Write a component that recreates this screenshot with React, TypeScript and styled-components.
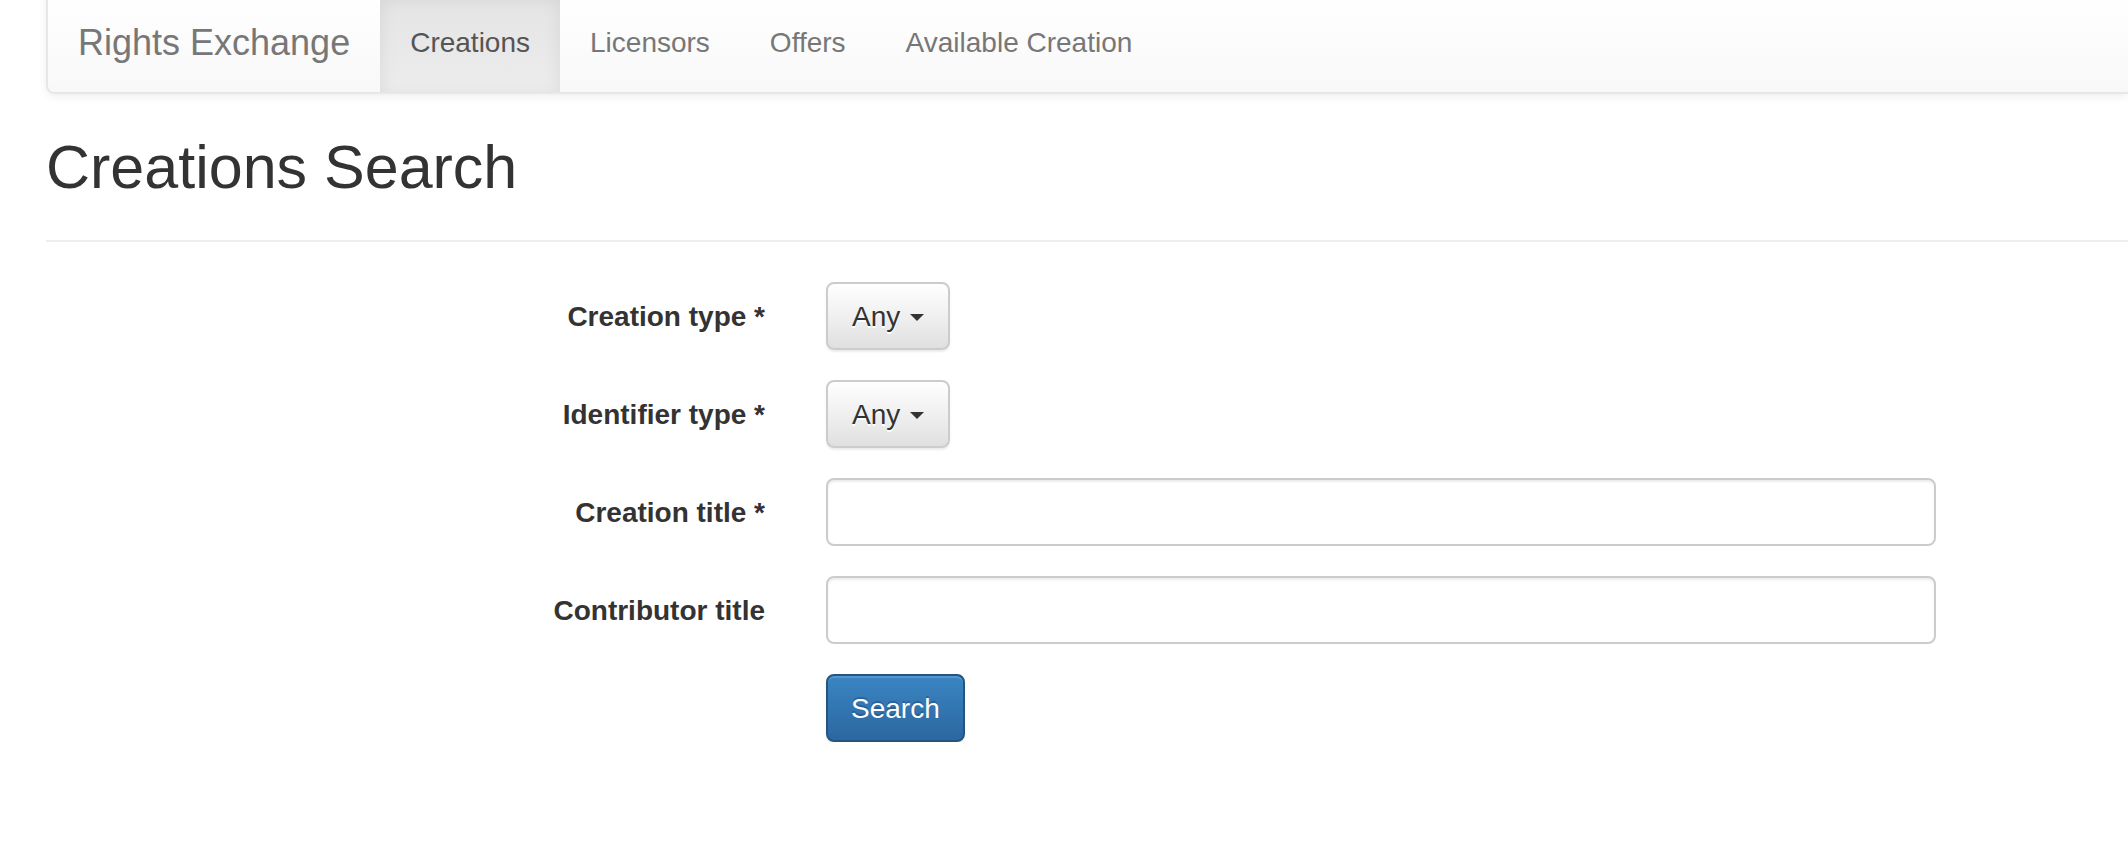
import styled, { createGlobalStyle } from "styled-components";

const GlobalStyle = createGlobalStyle`
  body {
    margin: 0;
    background: #fff;
    color: #333;
    font-family: "Liberation Sans", Arial, Helvetica, sans-serif;
    overflow: hidden;
  }
  * {
    box-sizing: border-box;
  }
`;

const Page = styled.div`
  padding-left: 46px;
`;

// navbar runs off the right edge of the window, so no right border there
const Navbar = styled.nav`
  margin-top: -10px;
  height: 104px;
  display: flex;
  align-items: stretch;
  padding-top: 1px;
  border: 2px solid #e7e7e7;
  border-right: 0;
  border-radius: 8px 0 0 8px;
  background: linear-gradient(to bottom, #fff 0, #f8f8f8 100%);
  box-shadow: inset 0 2px 0 rgba(255, 255, 255, 0.15),
    0 2px 10px rgba(0, 0, 0, 0.075);
`;

const Brand = styled.a`
  display: flex;
  align-items: center;
  padding: 0 30px;
  font-size: 36px;
  color: #777;
  text-decoration: none;
`;

const NavList = styled.ul`
  display: flex;
  margin: -1px 0 0;
  padding: 0;
  list-style: none;
`;

const NavLink = styled.a<{ $active?: boolean }>`
  display: flex;
  align-items: center;
  height: 100%;
  padding: 2px 30px 0;
  font-size: 28px;
  text-decoration: none;
  color: ${(p) => (p.$active ? "#555" : "#777")};
  background: ${(p) =>
    p.$active
      ? "linear-gradient(to bottom, #e4e4e4 0, #ececec 100%)"
      : "transparent"};
  box-shadow: ${(p) =>
    p.$active ? "inset 0 6px 18px rgba(0, 0, 0, 0.075)" : "none"};
`;

const PageHeader = styled.div`
  margin-top: 40px;
  padding-bottom: 40px;
  border-bottom: 2px solid #eee;
`;

const Title = styled.h1`
  margin: 0;
  font-size: 61px;
  font-weight: 500;
  line-height: 66px;
  color: #333;
`;

const Form = styled.form`
  display: flex;
  flex-direction: column;
  gap: 30px;
  margin-top: 40px;
`;

const FormRow = styled.div`
  display: grid;
  grid-template-columns: 719px 1110px;
  column-gap: 61px;
  align-items: start;
`;

const Label = styled.label`
  text-align: right;
  font-weight: bold;
  font-size: 28px;
  line-height: 40px;
  padding-top: 15px;
  color: #333;
`;

const DropdownButton = styled.button`
  justify-self: start;
  display: flex;
  align-items: center;
  gap: 10px;
  height: 68px;
  padding: 2px 24px 0;
  font-family: inherit;
  font-size: 28px;
  color: #333;
  border: 2px solid #ccc;
  border-radius: 8px;
  background: linear-gradient(to bottom, #fff 0, #e0e0e0 100%);
  text-shadow: 0 2px 0 #fff;
  box-shadow: inset 0 2px 0 rgba(255, 255, 255, 0.15),
    0 2px 2px rgba(0, 0, 0, 0.075);
`;

const Caret = styled.span`
  width: 0;
  height: 0;
  border-top: 7px solid #333;
  border-left: 7px solid transparent;
  border-right: 7px solid transparent;
`;

const TextInput = styled.input`
  width: 100%;
  height: 68px;
  padding: 12px 24px;
  font-family: inherit;
  font-size: 28px;
  border: 2px solid #ccc;
  border-radius: 8px;
  background: #fff;
  box-shadow: inset 0 2px 2px rgba(0, 0, 0, 0.075);
`;

const SubmitButton = styled.button`
  grid-column: 2;
  justify-self: start;
  height: 68px;
  padding: 2px 23px 0;
  font-family: inherit;
  font-size: 28px;
  color: #fff;
  border: 2px solid #245580;
  border-radius: 8px;
  background: linear-gradient(to bottom, #3a85c4 0, #2b67a0 100%);
  text-shadow: 0 -2px 0 rgba(0, 0, 0, 0.2);
  box-shadow: inset 0 2px 0 rgba(255, 255, 255, 0.15),
    0 2px 2px rgba(0, 0, 0, 0.075);
`;

const navItems = ["Creations", "Licensors", "Offers", "Available Creation"];

export default function App() {
  return (
    <Page>
      <GlobalStyle />
      <Navbar>
        <Brand href="#">Rights Exchange</Brand>
        <NavList>
          {navItems.map((item) => (
            <li key={item}>
              <NavLink href="#" $active={item === "Creations"}>
                {item}
              </NavLink>
            </li>
          ))}
        </NavList>
      </Navbar>

      <PageHeader>
        <Title>Creations Search</Title>
      </PageHeader>

      <Form onSubmit={(e) => e.preventDefault()}>
        <FormRow>
          <Label>Creation type *</Label>
          <DropdownButton type="button">
            Any <Caret />
          </DropdownButton>
        </FormRow>
        <FormRow>
          <Label>Identifier type *</Label>
          <DropdownButton type="button">
            Any <Caret />
          </DropdownButton>
        </FormRow>
        <FormRow>
          <Label>Creation title *</Label>
          <TextInput type="text" />
        </FormRow>
        <FormRow>
          <Label>Contributor title</Label>
          <TextInput type="text" />
        </FormRow>
        <FormRow>
          <SubmitButton type="submit">Search</SubmitButton>
        </FormRow>
      </Form>
    </Page>
  );
}
